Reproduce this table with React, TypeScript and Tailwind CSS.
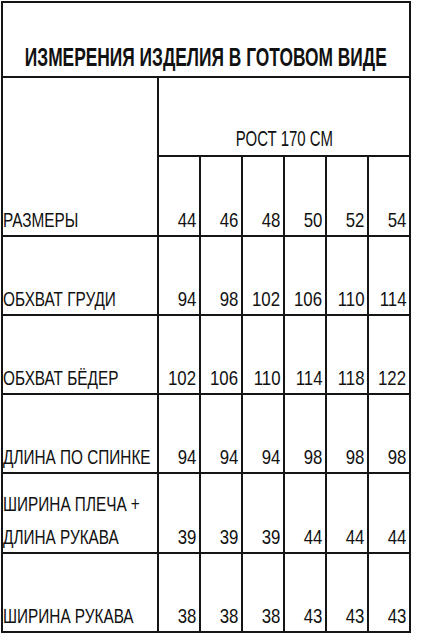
const sizes = ['44', '46', '48', '50', '52', '54']

const rows: { label: string[]; values: string[]; h: string }[] = [
  { label: ['ОБХВАТ ГРУДИ'], values: ['94', '98', '102', '106', '110', '114'], h: 'h-[77px]' },
  { label: ['ОБХВАТ БЁДЕР'], values: ['102', '106', '110', '114', '118', '122'], h: 'h-[77px]' },
  { label: ['ДЛИНА ПО СПИНКЕ'], values: ['94', '94', '94', '98', '98', '98'], h: 'h-[77px]' },
  { label: ['ШИРИНА ПЛЕЧА +', 'ДЛИНА РУКАВА'], values: ['39', '39', '39', '44', '44', '44'], h: 'h-[78px]' },
  { label: ['ШИРИНА РУКАВА'], values: ['38', '38', '38', '43', '43', '43'], h: 'h-[77px]' },
]

const font = "font-['Liberation_Sans',Arial,sans-serif]"

function Num({ v }: { v: string }) {
  return <span className="inline-block origin-right scale-x-[0.8] whitespace-nowrap">{v}</span>
}

function Label({ children }: { children: string }) {
  return <span className="inline-block origin-left scale-x-[0.73] whitespace-nowrap">{children}</span>
}

export default function App() {
  return (
    <div className={`min-h-screen bg-white pl-px pt-px ${font}`}>
      <div className="grid w-max grid-cols-[154px_repeat(6,40px)] gap-[2px] bg-[#151515] p-[2px] text-[#111]">
        <div className="col-span-7 flex h-[73px] items-end justify-center overflow-hidden bg-white pb-[6px] text-[25px] font-bold leading-none">
          <span className="inline-block origin-center scale-x-[0.694] whitespace-nowrap">ИЗМЕРЕНИЯ ИЗДЕЛИЯ В ГОТОВОМ ВИДЕ</span>
        </div>

        <div className="row-span-2 flex items-end bg-white pb-[5px] text-[21px] leading-none">
          <Label>РАЗМЕРЫ</Label>
        </div>
        <div className="col-span-6 flex h-[77px] items-end justify-center bg-white pb-[5px] text-[22px] leading-none">
          <span className="inline-block origin-center scale-x-[0.68] whitespace-nowrap">РОСТ 170 СМ</span>
        </div>
        {sizes.map((s) => (
          <div key={s} className="flex h-[78px] items-end justify-end bg-white pb-[5px] pr-[3px] text-[21px] leading-none">
            <Num v={s} />
          </div>
        ))}

        {rows.map((r) => (
          <div key={r.label.join(' ')} className="contents">
            <div className={`flex ${r.h} flex-col items-start justify-end bg-white pb-[5px] text-[21px] leading-none`}>
              {r.label.map((l, i) => (
                <div key={l} className={i > 0 ? 'mt-[12px]' : ''}>
                  <Label>{l}</Label>
                </div>
              ))}
            </div>
            {r.values.map((v, i) => (
              <div key={i} className={`flex ${r.h} items-end justify-end bg-white pb-[5px] pr-[3px] text-[21px] leading-none`}>
                <Num v={v} />
              </div>
            ))}
          </div>
        ))}
      </div>
    </div>
  )
}
